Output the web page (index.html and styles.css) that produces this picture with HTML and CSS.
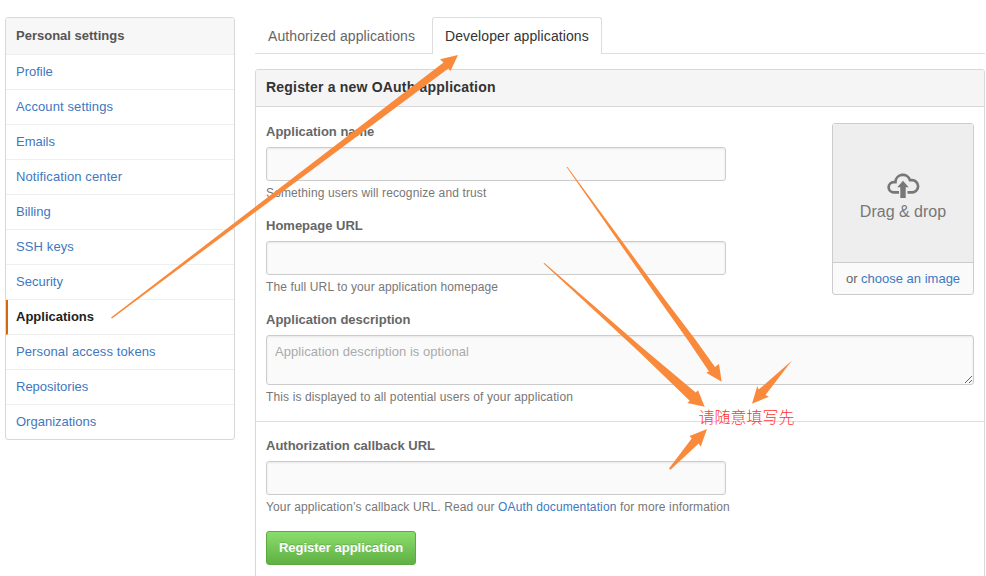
FILE: index.html
```html
<!DOCTYPE html>
<html lang="en">
<head>
<meta charset="utf-8">
<title>Developer applications</title>
<link rel="stylesheet" href="styles.css">
</head>
<body>
<div class="page">
  <nav class="menu">
    <h3 class="menu-heading">Personal settings</h3>
    <a class="menu-item" href="#">Profile</a>
    <a class="menu-item wide" href="#">Account settings</a>
    <a class="menu-item" href="#">Emails</a>
    <a class="menu-item wide" href="#">Notification center</a>
    <a class="menu-item" href="#">Billing</a>
    <a class="menu-item wide" href="#">SSH keys</a>
    <a class="menu-item" href="#">Security</a>
    <a class="menu-item selected" href="#">Applications</a>
    <a class="menu-item wide" href="#">Personal access tokens</a>
    <a class="menu-item" href="#">Repositories</a>
    <a class="menu-item" href="#">Organizations</a>
  </nav>
  <main class="content">
    <div class="tabs">
      <a class="tab" href="#">Authorized applications</a>
      <a class="tab active" href="#">Developer applications</a>
    </div>
    <section class="box">
      <h3 class="box-title">Register a new OAuth application</h3>
      <form class="box-body">
        <div class="top-row">
          <div class="fields">
            <div class="field">
              <label class="label" for="name">Application name</label>
              <input class="input" id="name" type="text">
              <p class="note">Something users will recognize and trust</p>
            </div>
            <div class="field">
              <label class="label" for="url">Homepage URL</label>
              <input class="input" id="url" type="text">
              <p class="note">The full URL to your application homepage</p>
            </div>
          </div>
          <div class="uploader">
            <div class="drop">
              <svg class="cloud" width="33" height="25" viewBox="0 0 33 25">
                <path d="M12 19.400H6.800a5.150 5.150 0 0 1 0-10.300h1.600A7.450 7.450 0 0 1 23 7.200h2a6.100 6.100 0 0 1 0 12.200H20.500" fill="none" stroke="#777" stroke-width="2.700"/>
                <path d="M16 7.800l5.700 6.400h-3V25h-5.400V14.200h-3z" fill="#777"/>
              </svg>
              <span class="drop-text">Drag &amp; drop</span>
            </div>
            <div class="choose">or <a href="#">choose an image</a></div>
          </div>
        </div>
        <div class="field">
          <label class="label" for="desc">Application description</label>
          <textarea class="input area" id="desc" placeholder="Application description is optional"></textarea>
          <p class="note">This is displayed to all potential users of your application</p>
        </div>
        <hr class="rule">
        <div class="field">
          <label class="label" for="cb">Authorization callback URL</label>
          <input class="input" id="cb" type="text">
          <p class="note">Your application’s callback URL. Read our <a href="#">OAuth documentation</a> for more information</p>
        </div>
        <button class="button" type="button">Register application</button>
      </form>
    </section>
  </main>
  <svg class="arrows" width="986" height="576" viewBox="0 0 986 576">
    <path d="M111 317.500L443.500 62.500L440 59.300L458 55L450.500 71L448.300 68.500L112 318.500Z"/>
    <path d="M566.500 167L567.500 167L665.300 300L695.700 340L715 367L719 364L721.700 381.700L706.300 372.700L709 371.500L687.700 340L659.300 300Z"/>
    <path d="M543.500 263.500L544.500 263L640 345.700L695.700 392.500L698 390.300L704.700 406.700L687.300 403L689.700 400.700L640 352.700Z"/>
    <path d="M792 360.500L765.500 395L769 396.700L752 403.700L757.300 386L758.700 389.500Z"/>
    <path d="M669 468.500L691.700 438.500L689.700 436L707 429L700.700 446.700L698.700 443.500L670.500 469.800Z"/>
  </svg>
  <span class="remark" lang="zh">请随意填写先</span>
</div>
</body>
</html>
```
FILE: styles.css
```css
* { box-sizing: border-box; }
body {
  margin: 0;
  background: #fff;
  color: #666;
  font: 13px/20px "Liberation Sans", Arial, sans-serif;
}
a { color: #4078c0; text-decoration: none; }
h3, p { margin: 0; }
.page {
  position: relative;
  width: 986px;
  height: 576px;
  overflow: hidden;
  display: flex;
  align-items: flex-start;
  gap: 20px;
  padding: 17px 1px 0 5px;
}
.menu {
  width: 230px;
  border: 1px solid #d8d8d8;
  border-radius: 3px;
  overflow: hidden;
}
.menu-heading {
  height: 37px;
  padding: 0 10px;
  border-bottom: 1px solid #eee;
  background: #f7f7f7;
  font-size: 13px;
  line-height: 35px;
  color: #555;
}
.menu-item {
  display: block;
  height: 35px;
  padding: 0 10px;
  border-bottom: 1px solid #eee;
  line-height: 33px;
}
.menu-item.wide { letter-spacing: .11px; }
.menu-item:last-child { height: 34px; border-bottom: 0; }
.menu-item.selected {
  padding-left: 8px;
  border-left: 2px solid #d26911;
  font-weight: bold;
  color: #222;
}
.content { width: 730px; }
.tabs {
  display: flex;
  height: 37px;
  border-bottom: 1px solid #ddd;
}
.tab {
  width: 177px;
  height: 37px;
  padding: 0 12px;
  border: 1px solid transparent;
  border-bottom: 0;
  font-size: 14px;
  line-height: 36px;
  letter-spacing: .1px;
  color: #666;
}
.tab.active {
  width: 170px;
  border-color: #ddd;
  border-radius: 3px 3px 0 0;
  background: #fff;
  color: #333;
}
.box {
  margin-top: 15px;
  height: 540px;
  border: 1px solid #d8d8d8;
  border-radius: 3px;
}
.box-title {
  height: 37px;
  padding: 0 10px;
  border-bottom: 1px solid #d8d8d8;
  border-radius: 2px 2px 0 0;
  background: #f5f5f5;
  font-size: 14px;
  line-height: 34px;
  letter-spacing: .2px;
  color: #333;
}
.box-body { padding: 15px 10px 0; }
.top-row { display: flex; justify-content: space-between; }
.field { margin-bottom: 14px; }
.label {
  display: block;
  margin-bottom: 5px;
  font-weight: bold;
  color: #666;
}
.input {
  display: block;
  width: 460px;
  height: 34px;
  padding: 7px 8px;
  border: 1px solid #ccc;
  border-radius: 3px;
  background: #fafafa;
  box-shadow: inset 0 1px 2px rgba(0, 0, 0, .075);
  font: 13px/18px "Liberation Sans", Arial, sans-serif;
  outline: none;
}
.area { width: 708px; height: 50px; resize: both; }
.area::placeholder { color: #aaa; letter-spacing: .05px; }
.note {
  margin-top: 3px;
  font-size: 12px;
  line-height: 18px;
  letter-spacing: .125px;
  color: #777;
}
.rule {
  height: 1px;
  margin: 15px -10px 14px;
  border: 0;
  background: #ddd;
}
.uploader {
  width: 142px;
  height: 172px;
  margin-top: 1px;
  border: 1px solid #ccc;
  border-radius: 3px;
  background: #fafafa;
}
.drop {
  display: flex;
  flex-direction: column;
  align-items: center;
  height: 139px;
  padding-top: 49px;
  border-bottom: 1px solid #ccc;
  background: #eee;
  color: #777;
}
.cloud { display: block; }
.drop-text { margin-top: 4px; font-size: 16px; }
.choose { text-align: center; line-height: 31px; }
.button {
  display: block;
  width: 150px;
  height: 34px;
  margin-top: 15px;
  padding: 0;
  border: 1px solid #5ca941;
  border-radius: 3px;
  background: linear-gradient(#8add6d, #60b044);
  font: bold 13px/20px "Liberation Sans", Arial, sans-serif;
  color: #fff;
  text-shadow: 0 -1px 0 rgba(0, 0, 0, .15);
}
.arrows {
  position: absolute;
  left: 0;
  top: 0;
  fill: #f98a3c;
  pointer-events: none;
}
.remark {
  position: absolute;
  left: 698.5px;
  top: 406px;
  font: 300 16px/20px "Noto Sans CJK SC", sans-serif;
  color: #f33;
  white-space: nowrap;
}
```
